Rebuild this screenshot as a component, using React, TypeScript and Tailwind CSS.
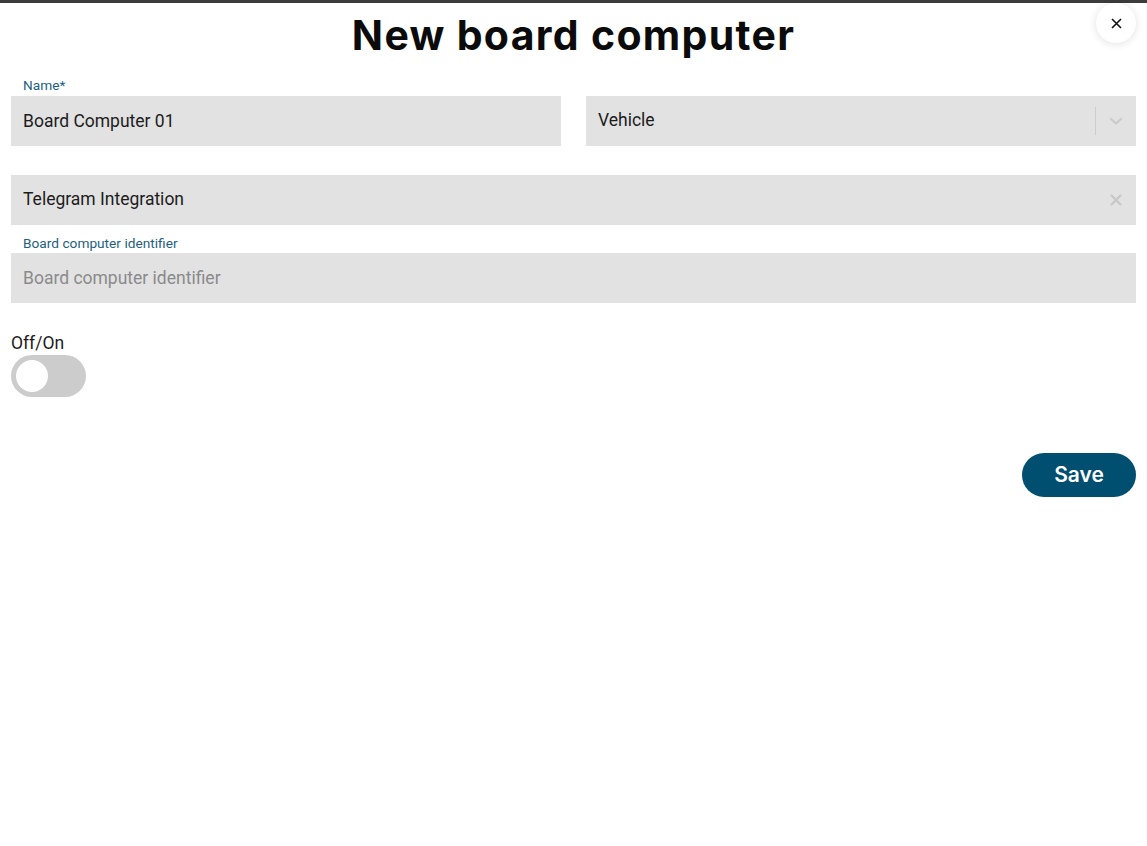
import { useState } from 'react';

const roboto = { fontFamily: 'Roboto, "Liberation Sans", sans-serif' };

export default function App() {
  const [on, setOn] = useState(false);

  return (
    <div className="min-h-[846px] w-full bg-white" style={roboto}>
      <div className="h-[3px] bg-[#3c3c3c]" />

      <div className="relative px-[11px]">
        {/* Close */}
        <button className="absolute right-[11px] top-0 flex h-10 w-10 items-center justify-center rounded-full bg-white text-[#111] shadow-[0_1px_8px_rgba(0,0,0,0.12)]">
          <svg width="11" height="11" viewBox="0 0 11 11" fill="none" stroke="currentColor" strokeWidth="1.6">
            <path d="M1 1l9 9M10 1l-9 9" />
          </svg>
        </button>

        <h1
          className="pt-[8px] text-center text-[41px] font-bold leading-[48px] tracking-[1.3px] text-[#0b0b0b]"
          style={{ fontFamily: 'Inter, "DejaVu Sans", sans-serif' }}
        >
          New board computer
        </h1>

        {/* Row 1 */}
        <div className="mt-[19px] grid grid-cols-2 gap-[25px]">
          <div>
            <div className="mb-[3px] pl-[12px] text-[13.7px] leading-[15px] text-[#1e5f80]">Name*</div>
            <div className="flex h-[50px] items-center bg-[#e2e2e2] px-[12px] text-[17.5px] text-[#1c1c1c]">
              Board Computer 01
            </div>
          </div>
          <div className="flex flex-col justify-end">
            <div className="flex h-[50px] items-center bg-[#e2e2e2] pl-[12px] text-[17.5px] text-[#1c1c1c]">
              <span className="flex-1 pb-[2px]">Vehicle</span>
              <div className="h-[28px] w-px bg-[#cdcdcd]" />
              <div className="flex w-[40px] items-center justify-center text-[#cacaca]">
                <svg width="14" height="10" viewBox="0 0 14 10" fill="none" stroke="currentColor" strokeWidth="2.2" strokeLinecap="round" strokeLinejoin="round">
                  <path d="M2 3l5 4.5L12 3" />
                </svg>
              </div>
            </div>
          </div>
        </div>

        {/* Telegram */}
        <div className="mt-[29px] flex h-[50px] items-center bg-[#e2e2e2] pl-[12px] text-[17.5px] text-[#1c1c1c]">
          <span className="flex-1 pb-[2px]">Telegram Integration</span>
          <div className="flex w-[40px] items-center justify-center text-[#c6c6c6]">
            <svg width="12" height="12" viewBox="0 0 12 12" fill="none" stroke="currentColor" strokeWidth="2">
              <path d="M1 1l10 10M11 1L1 11" />
            </svg>
          </div>
        </div>

        {/* Identifier */}
        <div className="mt-[11px]">
          <div className="mb-[2px] pl-[12px] text-[13.7px] leading-[15px] text-[#1e5f80]">Board computer identifier</div>
          <input
            placeholder="Board computer identifier"
            className="block h-[50px] w-full bg-[#e2e2e2] px-[12px] text-[17.5px] text-[#1c1c1c] outline-none placeholder:text-[#8a8a8a]"
          />
        </div>

        {/* Toggle */}
        <div className="mt-[30px]">
          <div className="text-[17.5px] leading-[20px] text-[#1c1c1c]">Off/On</div>
          <button
            onClick={() => setOn(!on)}
            className={`mt-[2px] flex h-[42px] w-[75px] items-center rounded-full px-[5px] ${on ? 'justify-end bg-[#004e70]' : 'justify-start bg-[#cccccc]'}`}
          >
            <span className="h-[32px] w-[32px] rounded-full bg-white" />
          </button>
        </div>

        {/* Save */}
        <div className="mt-[56px] flex justify-end">
          <button
            className="h-[44px] w-[114px] rounded-full bg-[#004e70] text-[21px] font-semibold text-white"
            style={{ fontFamily: 'Inter, "DejaVu Sans", sans-serif' }}
          >
            Save
          </button>
        </div>
      </div>
    </div>
  );
}
